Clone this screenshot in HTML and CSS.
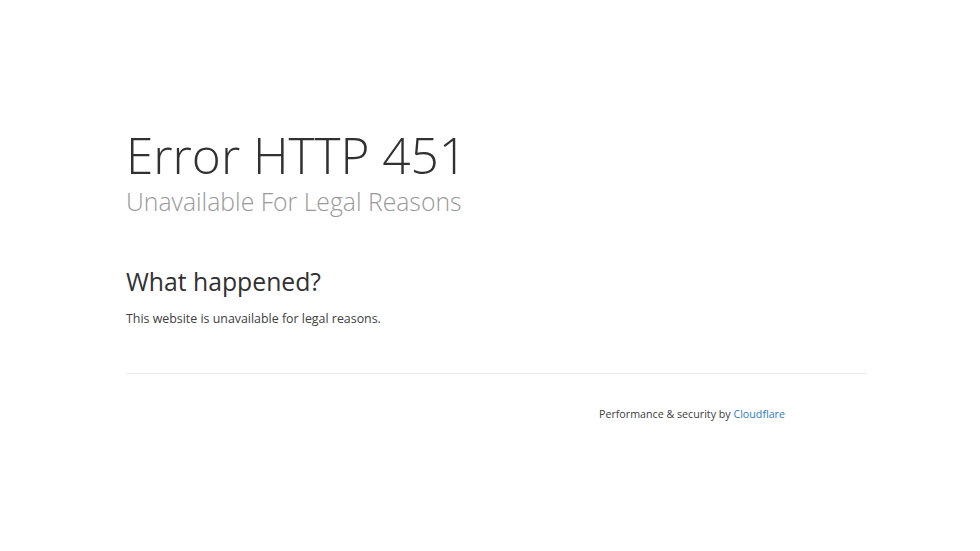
FILE: index.html
```html
<!DOCTYPE html>
<html lang="en">
<head>
<meta charset="utf-8">
<title>Error HTTP 451</title>
<link rel="stylesheet" href="styles.css">
</head>
<body>
<div class="page">
  <header class="hero">
    <h1 class="title">Error HTTP 451</h1>
    <h2 class="subtitle">Unavailable For Legal Reasons</h2>
  </header>
  <section class="section">
    <h3 class="section-title">What happened?</h3>
    <p class="section-text">This website is unavailable for legal reasons.</p>
  </section>
  <footer class="footer">
    <span class="footer-text">Performance &amp; security by <a class="footer-link" href="#">Cloudflare</a></span>
  </footer>
</div>
</body>
</html>
```
FILE: styles.css
```css
html, body {
  margin: 0;
  padding: 0;
  background: #fff;
}
body {
  font-family: "Open Sans", "Liberation Sans", sans-serif;
  color: #404040;
}
.page {
  width: 741px;
  margin: 0 0 0 126px;
  padding-top: 125px;
}
.hero {
  display: flex;
  flex-direction: column;
}
.title {
  margin: 0;
  font-size: 49.5px;
  font-weight: 300;
  line-height: 60px;
  color: #313131;
}
.subtitle {
  margin: 1.5px 0 0 0;
  font-size: 24.75px;
  font-weight: 300;
  line-height: 30px;
  color: #999;
}
.section {
  margin-top: 50px;
  padding-bottom: 44px;
  border-bottom: 1px solid #ececec;
}
.section-title {
  margin: 0;
  font-size: 24.75px;
  font-weight: 400;
  line-height: 30px;
  color: #313131;
}
.section-text {
  margin: 12px 0 0 0;
  font-size: 12.4px;
  line-height: 20px;
  color: #404040;
}
.footer {
  display: flex;
  justify-content: flex-end;
  padding: 32.5px 82px 0 0;
}
.footer-text {
  font-size: 10.7px;
  line-height: 16px;
  color: #404040;
}
.footer-link {
  color: #2f7bbf;
  text-decoration: none;
}
```
